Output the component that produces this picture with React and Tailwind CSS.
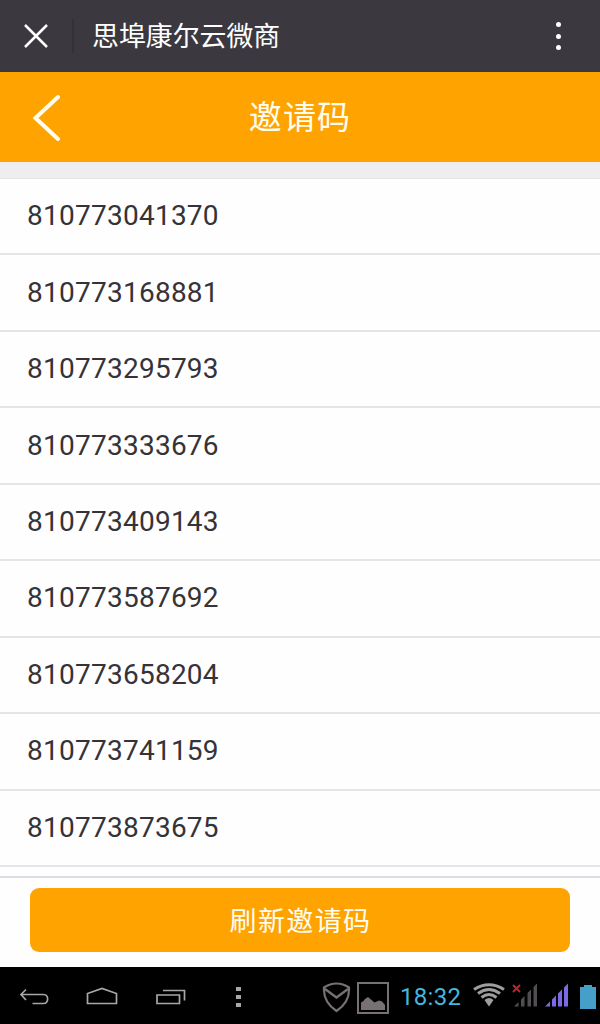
const CODES = [
  '810773041370',
  '810773168881',
  '810773295793',
  '810773333676',
  '810773409143',
  '810773587692',
  '810773658204',
  '810773741159',
  '810773873675',
];

function TitleBar() {
  return (
    <header className="flex h-[72px] shrink-0 items-center bg-[#3b393f] text-white">
      <button aria-label="关闭" className="flex h-full w-[72px] items-center justify-center">
        <svg width="24" height="24" viewBox="0 0 24 24" fill="none" stroke="currentColor" strokeWidth="2.5">
          <path d="M1 1 23 23M23 1 1 23" />
        </svg>
      </button>
      <div className="h-[34px] w-[2px] bg-[#333237]" />
      <h1 className="ml-[18px] flex-1 pb-[2px] text-[26.9px] leading-[70px]">思埠康尔云微商</h1>
      <button aria-label="更多" className="mr-[39px] flex flex-col gap-[6.5px]">
        <span className="size-[5px] rounded-full bg-white" />
        <span className="size-[5px] rounded-full bg-white" />
        <span className="size-[5px] rounded-full bg-white" />
      </button>
    </header>
  );
}

function PageHeader() {
  return (
    <div className="grid h-[90px] shrink-0 grid-cols-[100px_1fr_100px] items-center bg-[#ffa300] text-[#fffdf0]">
      <button aria-label="返回" className="pl-[32px]">
        <svg width="30" height="48" viewBox="0 0 30 48" fill="none" stroke="currentColor" strokeWidth="4" strokeLinecap="round">
          <path d="M26 4 3.500 25 26 46" />
        </svg>
      </button>
      <h2 className="pb-[4px] text-center text-[33px] leading-[86px] tracking-[1.2px]">邀请码</h2>
    </div>
  );
}

function NavBar() {
  return (
    <nav className="flex h-[57px] shrink-0 items-center overflow-hidden bg-black pl-[19px] text-[#a9a6a9]">
      <svg className="mt-[2px] shrink-0" width="30" height="18" viewBox="0 0 30 18" fill="none" stroke="currentColor" strokeWidth="1.7">
        <path d="M7 1.500 2 6.500 7 12M2 6.500H24.500C30 6.500 30 15.500 24.500 15.500H13.500" />
      </svg>
      <svg className="ml-[37px] mt-px shrink-0" width="32" height="18" viewBox="0 0 32 18" fill="none" stroke="currentColor" strokeWidth="1.7">
        <path d="M1.500 16.500V6.500L16 1.500 30.500 6.500V16.500Z" />
      </svg>
      <svg className="ml-[38px] mt-[2px] shrink-0" width="30" height="16" viewBox="0 0 30 16" fill="none" stroke="currentColor" strokeWidth="1.7">
        <path d="M1 6H23.500V14.500H1ZM7 1.500H28.500V11.500" />
      </svg>
      <svg className="ml-[50px] mt-[2px] shrink-0" width="6" height="20" viewBox="0 0 6 20" fill="currentColor">
        <path d="M0 0h5v4h-5zM0 8h5v4h-5zM0 16h5v4h-5z" />
      </svg>
      <svg className="ml-[80px] mt-[4px] shrink-0" width="29" height="31" viewBox="0 0 29 31" fill="none" stroke="#777175" strokeWidth="2.2">
        <path d="M14.500 1.500Q21 1.500 27 5.500Q28 20 14.500 29Q1 20 2 5.500Q8 1.500 14.500 1.500Z" />
        <path d="M3 7 14.500 15.500 26 7" strokeWidth="2.300" />
      </svg>
      <svg className="ml-[6px] mt-[5px] shrink-0" width="32" height="32" viewBox="0 0 32 32">
        <path d="M1 1H31V31H1Z" fill="none" stroke="#777175" strokeWidth="2" />
        <path d="M4 28V20.500L6.500 19 8 17 11 15 17.500 20.500 22 18.500 25 19.500 28 23V28Z" fill="#777175" />
      </svg>
      <span className="ml-[11px] w-[61px] shrink-0 whitespace-nowrap pt-[4px] font-[Roboto] text-[24px] leading-[53px] tracking-[.3px] text-[#45b6df]">18:32</span>
      <svg className="ml-[12px] -mt-[1px] shrink-0" width="32" height="24" viewBox="0 0 32 24" fill="none" stroke="#a09da0" strokeWidth="3">
        <path d="M1 6.500Q16-3 31 6.500" />
        <path d="M5 10.500Q16 2.500 27 10.500" />
        <path d="M8.500 14.500Q16 8.500 23.500 14.500" />
        <path d="M11.500 17Q16 13 20.500 17L16 23.500Z" fill="#a09da0" stroke="none" />
      </svg>
      <svg className="ml-[7px] -mt-[1px] shrink-0" width="26" height="24" viewBox="0 0 26 24">
        <path d="M2 23.500 6.500 19V23.500ZM9 16.500 12.500 13V23.500H9ZM15.500 10 19 6.500V23.500H15.500ZM21.500 4 25 .5V23.500H21.500Z" fill="#514e51" />
        <path d="M1 2 8 9M8 2 1 9" stroke="#c5202b" strokeWidth="2" />
      </svg>
      <svg className="ml-[6px] -mt-[1px] shrink-0" width="25" height="24" viewBox="0 0 25 24" fill="#7d69e8">
        <path d="M1 23.500 6 18.500V23.500ZM8 16.500 12 12.500V23.500H8ZM14 10.500 18 6.500V23.500H14ZM20 4.500 24 .5V23.500H20Z" />
      </svg>
      <svg className="ml-[11px] mt-[2px] shrink-0" width="16" height="24" viewBox="0 0 16 24" fill="#459fc9">
        <path d="M4 0H12V2H16V24H0V2H4Z" />
      </svg>
    </nav>
  );
}

export default function App() {
  return (
    <div className="flex h-[1024px] w-[600px] flex-col overflow-hidden bg-[#fefefe] font-['Noto_Sans_CJK_SC',sans-serif]">
      <TitleBar />
      <PageHeader />
      <main className="flex min-h-0 flex-1 flex-col">
        <div className="h-[17px] shrink-0 border-b border-[#e7e4e8] bg-[#f0edf1]" />
        <ul className="grid h-[688px] shrink-0 grid-rows-9 font-[Roboto] text-[28px] tracking-[.25px] text-[#353338]">
          {CODES.map((code) => (
            <li key={code} className="flex items-center border-b-2 border-[#e6e4e8] pl-[27px]">
              {code}
            </li>
          ))}
        </ul>
      </main>
      <footer className="h-[91px] shrink-0 border-t-2 border-[#e0dde2] px-[30px] pt-[10px]">
        <button className="h-[64px] w-full rounded-[9px] bg-[#ffa300] pl-[1px] text-[27px] leading-[64px] tracking-[1.4px] text-[#fffdf0]">
          刷新邀请码
        </button>
      </footer>
      <NavBar />
    </div>
  );
}
